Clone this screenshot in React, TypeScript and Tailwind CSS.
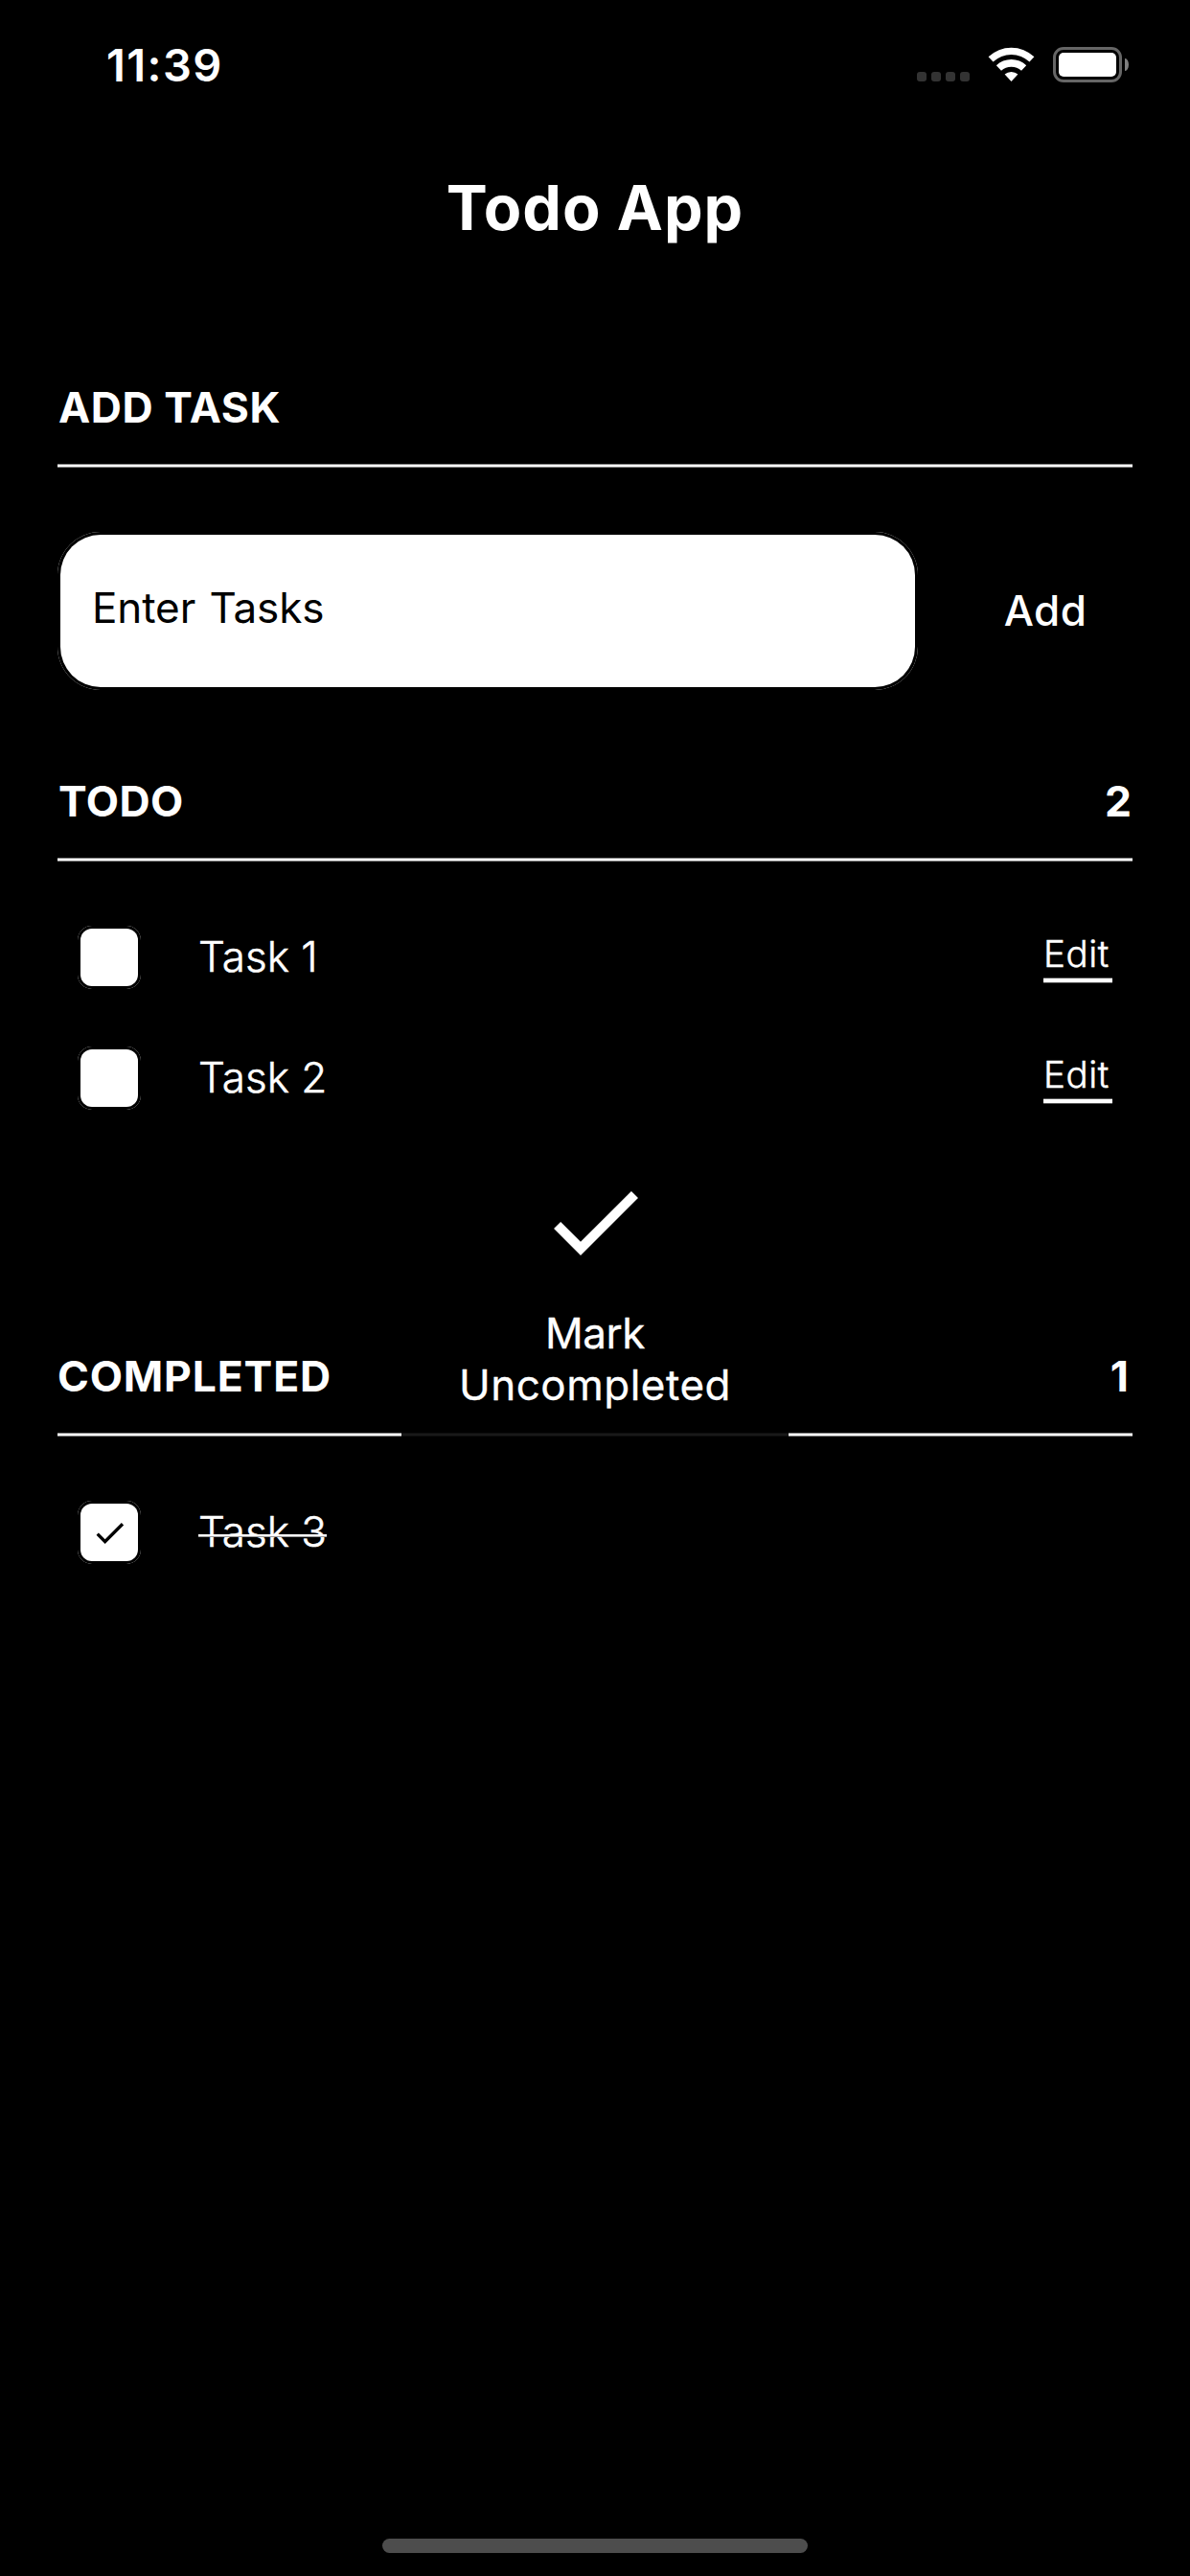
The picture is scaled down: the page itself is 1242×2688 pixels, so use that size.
import type { ReactNode } from 'react';

const CHECK = 'M9 16.17L4.83 12l-1.42 1.41L9 19 21 7l-1.41-1.41z';

function StatusBar() {
  return (
    <div className="flex h-[132px] items-start justify-between pl-[111px] pr-[64px]">
      <span className="mt-[40px] text-[47px] leading-[56px] font-semibold tracking-[1.42px]">11:39</span>
      <div className="mt-[49px] flex h-[37px] items-start">
        <div className="mt-[26px] flex gap-[5px]">
          {[0, 1, 2, 3].map((i) => (
            <span key={i} className="size-[10px] rounded-[3px] bg-[#333333]" />
          ))}
        </div>
        <svg className="ml-[19px] h-[36px] w-[49px]" viewBox="0 0 49 36" fill="#fff">
          <path d="M0.6 10.300A34.500 34.500 0 0 1 48.400 10.300L43.500 15.600A27.500 27.500 0 0 0 5.500 15.600Z" />
          <path d="M8.800 19.300A22.600 22.600 0 0 1 40.200 19.300L35 24.800A15.300 15.300 0 0 0 14 24.800Z" />
          <path d="M17.600 28.600A10.200 10.200 0 0 1 31.400 28.600L24.500 36Z" />
        </svg>
        <div className="ml-[19px] flex items-center">
          <div className="h-[37px] w-[72px] rounded-[11px] border-[3px] border-[#666666] p-[3px]">
            <div className="h-[25px] w-[60px] rounded-[5px] bg-white" />
          </div>
          <div className="ml-[3px] h-[13px] w-[4px] rounded-r-[4px_7px] bg-[#808080]" />
        </div>
      </div>
    </div>
  );
}

function Rule() {
  return <div className="h-[4px] border-y border-[#858585] bg-white" />;
}

function SectionHeader({ title, titleClass, count }: { title: string; titleClass: string; count?: ReactNode }) {
  return (
    <div>
      <div className="flex h-[86px] items-start justify-between px-px text-[44.5px] leading-[54px] font-bold">
        <span className={titleClass}>{title}</span>
        {count}
      </div>
      <Rule />
    </div>
  );
}

function Checkbox({ checked }: { checked?: boolean }) {
  return (
    <div className="size-[66px] rounded-[15px] bg-white">
      <div className="size-[66px] rounded-[15px] bg-black p-[3px]">
        <div className="flex size-[60px] items-center justify-center rounded-[12px] bg-white">
          {checked && (
            <svg className="size-[39px]" viewBox="0 0 24 24" fill="#000">
              <path d={CHECK} />
            </svg>
          )}
        </div>
      </div>
    </div>
  );
}

function TaskRow({ label, done }: { label: string; done?: boolean }) {
  return (
    <div className="flex h-[126px] items-center pl-[21px] pr-[21px]">
      <Checkbox checked={done} />
      <div className="relative mb-[2px] ml-[60px] text-[44px] leading-[54px] font-light [-webkit-text-stroke:0.5px_white]">
        {label}
        {done && <span className="absolute top-[30px] left-0 h-[3px] w-full border-b border-[#999999] bg-white" />}
      </div>
      {!done && (
        <div className="ml-auto h-[56px] w-[72px]">
          <div className="text-[38.5px] leading-[48px] font-light tracking-[0.54px] [-webkit-text-stroke:0.5px_white]">
            Edit
          </div>
          <div className="mt-px h-[6px] border-y border-[#555555] bg-white" />
        </div>
      )}
    </div>
  );
}

function Toast() {
  return (
    <div className="absolute top-[1142px] left-[419px] flex h-[404px] w-[404px] flex-col items-center bg-black/90 pt-[73px]">
      <svg className="size-[120px]" viewBox="0 0 24 24" fill="#fff">
        <path d={CHECK} />
      </svg>
      <div className="mt-[29px] text-center text-[44px] leading-[54px] [-webkit-text-stroke:0.3px_white]">
        <div className="tracking-[-0.5px]">Mark</div>
        <div className="tracking-[0.48px]">Uncompleted</div>
      </div>
    </div>
  );
}

export default function App() {
  return (
    <div className="relative flex h-[2688px] w-[1242px] flex-col overflow-hidden bg-black font-['Inter',sans-serif] text-white">
      <StatusBar />
      <h1 className="mt-[45px] text-center text-[64.5px] leading-[80px] font-bold tracking-[1px]">Todo App</h1>
      <main className="mt-[141px] px-[60px]">
        <SectionHeader title="ADD TASK" titleClass="tracking-[0.58px]" />
        <div className="mt-[67px] flex h-[165px] items-center">
          <div className="h-[165px] w-[898px] shrink-0 rounded-[45px] bg-white">
            <div className="h-full rounded-[45px] bg-black p-[3px]">
              <div className="flex h-full items-center rounded-[42px] bg-white pb-[7px] pl-[33px] text-[44px] leading-[54px] tracking-[-0.1px] text-black [word-spacing:2px]">
                Enter Tasks
              </div>
            </div>
          </div>
          <button className="mb-[2px] ml-[42px] w-[182px] text-center text-[44px] leading-[54px] font-medium tracking-[0.5px]">Add</button>
        </div>

        <div className="mt-[89px]">
          <SectionHeader title="TODO" titleClass="tracking-[0.43px]" count={<span>2</span>} />
        </div>
        <div className="mt-[37px]">
          <TaskRow label="Task 1" />
          <TaskRow label="Task 2" />
        </div>

        <div className="mt-[221px]">
          <SectionHeader
            title="COMPLETED"
            titleClass="tracking-[0.82px] -ml-px"
            count={<span className="mr-[3px]">1</span>}
          />
        </div>
        <div className="mt-[37px]">
          <TaskRow label="Task 3" done />
        </div>
      </main>
      <Toast />
      <div className="mt-auto mb-[24px] ml-[399px] h-[15px] w-[444px] rounded-full bg-[#4d4d4d]" />
    </div>
  );
}
